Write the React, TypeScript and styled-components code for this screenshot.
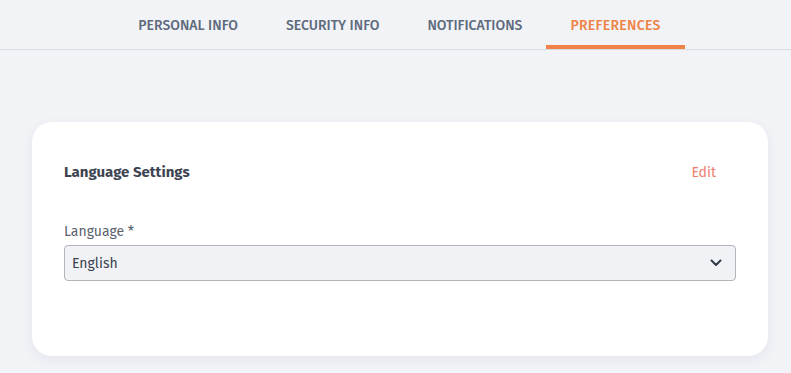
import React from "react";
import styled, { createGlobalStyle } from "styled-components";

const Global = createGlobalStyle`
  html, body { margin: 0; padding: 0; background: #f2f3f7; }
  body { font-family: "Fira Sans", Roboto, "Noto Sans", sans-serif; }
  * { box-sizing: border-box; }
`;

const Page = styled.div`
  width: 791px;
  height: 373px;
  background: #f2f3f7;
  overflow: hidden;
`;

const TabBar = styled.nav`
  display: flex;
  justify-content: center;
  padding-left: 8px;
  height: 50px;
  border-bottom: 1px solid #d9dbe0;
`;

const Tab = styled.div<{ $active?: boolean }>`
  display: flex;
  align-items: center;
  padding: 0 24px;
  height: 49px;
  font-size: 14px;
  font-weight: 500;
  letter-spacing: ${(p) => (p.$active ? "0.3px" : "0")};
  color: ${(p) => (p.$active ? "#ef8347" : "#5e6b7d")};
  border-bottom: 4px solid ${(p) => (p.$active ? "#ef8347" : "transparent")};
  border-top: 5px solid transparent;
`;

const Content = styled.main`
  padding: 72px 23px 0 32px;
`;

const Card = styled.section`
  background: #fff;
  border-radius: 20px;
  box-shadow: 0 4px 14px rgba(30, 40, 60, 0.06);
  padding: 40px 32px 74px;
  height: 234px;
`;

const CardHeader = styled.div`
  display: flex;
  justify-content: space-between;
  align-items: center;
  height: 20px;
  margin-bottom: 41px;
`;

const Title = styled.h2`
  margin: 0;
  font-size: 15px;
  font-weight: 700;
  color: #3d4452;
`;

const EditLink = styled.button`
  border: 0;
  background: none;
  padding: 0 20px 0 0;
  font: inherit;
  font-size: 14px;
  color: #ee8070;
  cursor: pointer;
`;

const Field = styled.div`
  display: flex;
  flex-direction: column;
  gap: 5px;
`;

const Label = styled.label`
  font-size: 14px;
  font-weight: 400;
  color: #5a6270;
`;

const Select = styled.div`
  display: flex;
  align-items: center;
  justify-content: space-between;
  height: 36px;
  padding: 0 13px 0 7px;
  background: #f1f2f5;
  border: 1px solid #b3b5ba;
  border-radius: 4px;
  font-size: 14px;
  color: #3a4250;
`;

const Chevron = () => (
  <svg width="12" height="8" viewBox="0 0 12 8" fill="none">
    <path d="M1.5 1.5L6 6L10.5 1.5" stroke="#2f3a48" strokeWidth="2" strokeLinecap="round" strokeLinejoin="round" />
  </svg>
);

export default function App() {
  return (
    <Page>
      <Global />
      <TabBar>
        <Tab>PERSONAL INFO</Tab>
        <Tab>SECURITY INFO</Tab>
        <Tab>NOTIFICATIONS</Tab>
        <Tab $active>PREFERENCES</Tab>
      </TabBar>
      <Content>
        <Card>
          <CardHeader>
            <Title>Language Settings</Title>
            <EditLink>Edit</EditLink>
          </CardHeader>
          <Field>
            <Label>Language *</Label>
            <Select>
              <span>English</span>
              <Chevron />
            </Select>
          </Field>
        </Card>
      </Content>
    </Page>
  );
}
